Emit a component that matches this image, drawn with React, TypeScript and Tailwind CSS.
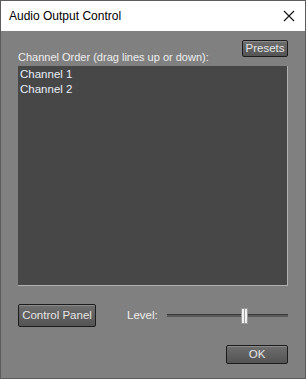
import React from "react";

const channels = ["Channel 1", "Channel 2"];

const Btn = ({ label, className }: { label: string; className: string }) => (
  <button
    className={`flex items-center justify-center whitespace-nowrap rounded-[2px] border border-[#1c1c1c] bg-gradient-to-b from-[#6e6e6e] to-[#545454] text-[11.5px] leading-none text-[#e6e6e6] shadow-[inset_0_1px_0_#8a8a8a] ${className}`}
  >
    {label}
  </button>
);

export default function App() {
  return (
    <div
      className="flex h-[379px] w-[306px] flex-col border border-[#5c5c5c] bg-[#808080]"
      style={{ fontFamily: "'Liberation Sans', Arial, sans-serif" }}
    >
      {/* Title bar */}
      <div className="flex h-[30px] shrink-0 items-center justify-between bg-white pl-[8px] pr-[10px]">
        <span className="text-[12px] text-black">Audio Output Control</span>
        <svg width="12" height="12" viewBox="0 0 12 12">
          <path d="M1 1 L11 11 M11 1 L1 11" stroke="#111" strokeWidth="1.1" />
        </svg>
      </div>

      <div className="flex flex-1 flex-col px-[17px]">
        <div className="mt-[9px] flex justify-end">
          <Btn label="Presets" className="h-[17px] w-[46px]" />
        </div>
        <div className="-mt-[7px] whitespace-nowrap text-[11px] leading-[14px] text-[#eeeeee]">
          Channel Order (drag lines up or down):
        </div>

        {/* Channel list */}
        <div className="mt-[2px] h-[220px] border-b border-r border-[#b0b0b0] bg-[#474747] px-[2px] pt-[1px]">
          {channels.map((c) => (
            <div key={c} className="h-[15px] text-[11.5px] leading-[15px] text-[#e8eef8]">
              {c}
            </div>
          ))}
        </div>

        {/* Controls row */}
        <div className="mt-[18px] flex items-center">
          <Btn label="Control Panel" className="h-[23px] w-[78px]" />
          <span className="ml-[31px] text-[11.5px] text-[#eeeeee]">Level:</span>
          <div className="relative ml-auto flex h-[16px] w-[121px] items-center">
            <div className="h-[3px] w-full border-t border-[#3a3a3a] border-b-[#b8b8b8] bg-[#5a5a5a]" />
            <div className="absolute left-[74px] top-0 h-[16px] w-[7px] rounded-[1px] border border-[#9a9a9a] bg-[#f2f2f2]">
              <div className="mx-auto h-full w-[1px] bg-[#a0a0a0]" />
            </div>
          </div>
        </div>

        <div className="mt-[18px] flex justify-end">
          <Btn label="OK" className="h-[19px] w-[62px]" />
        </div>
      </div>
    </div>
  );
}
